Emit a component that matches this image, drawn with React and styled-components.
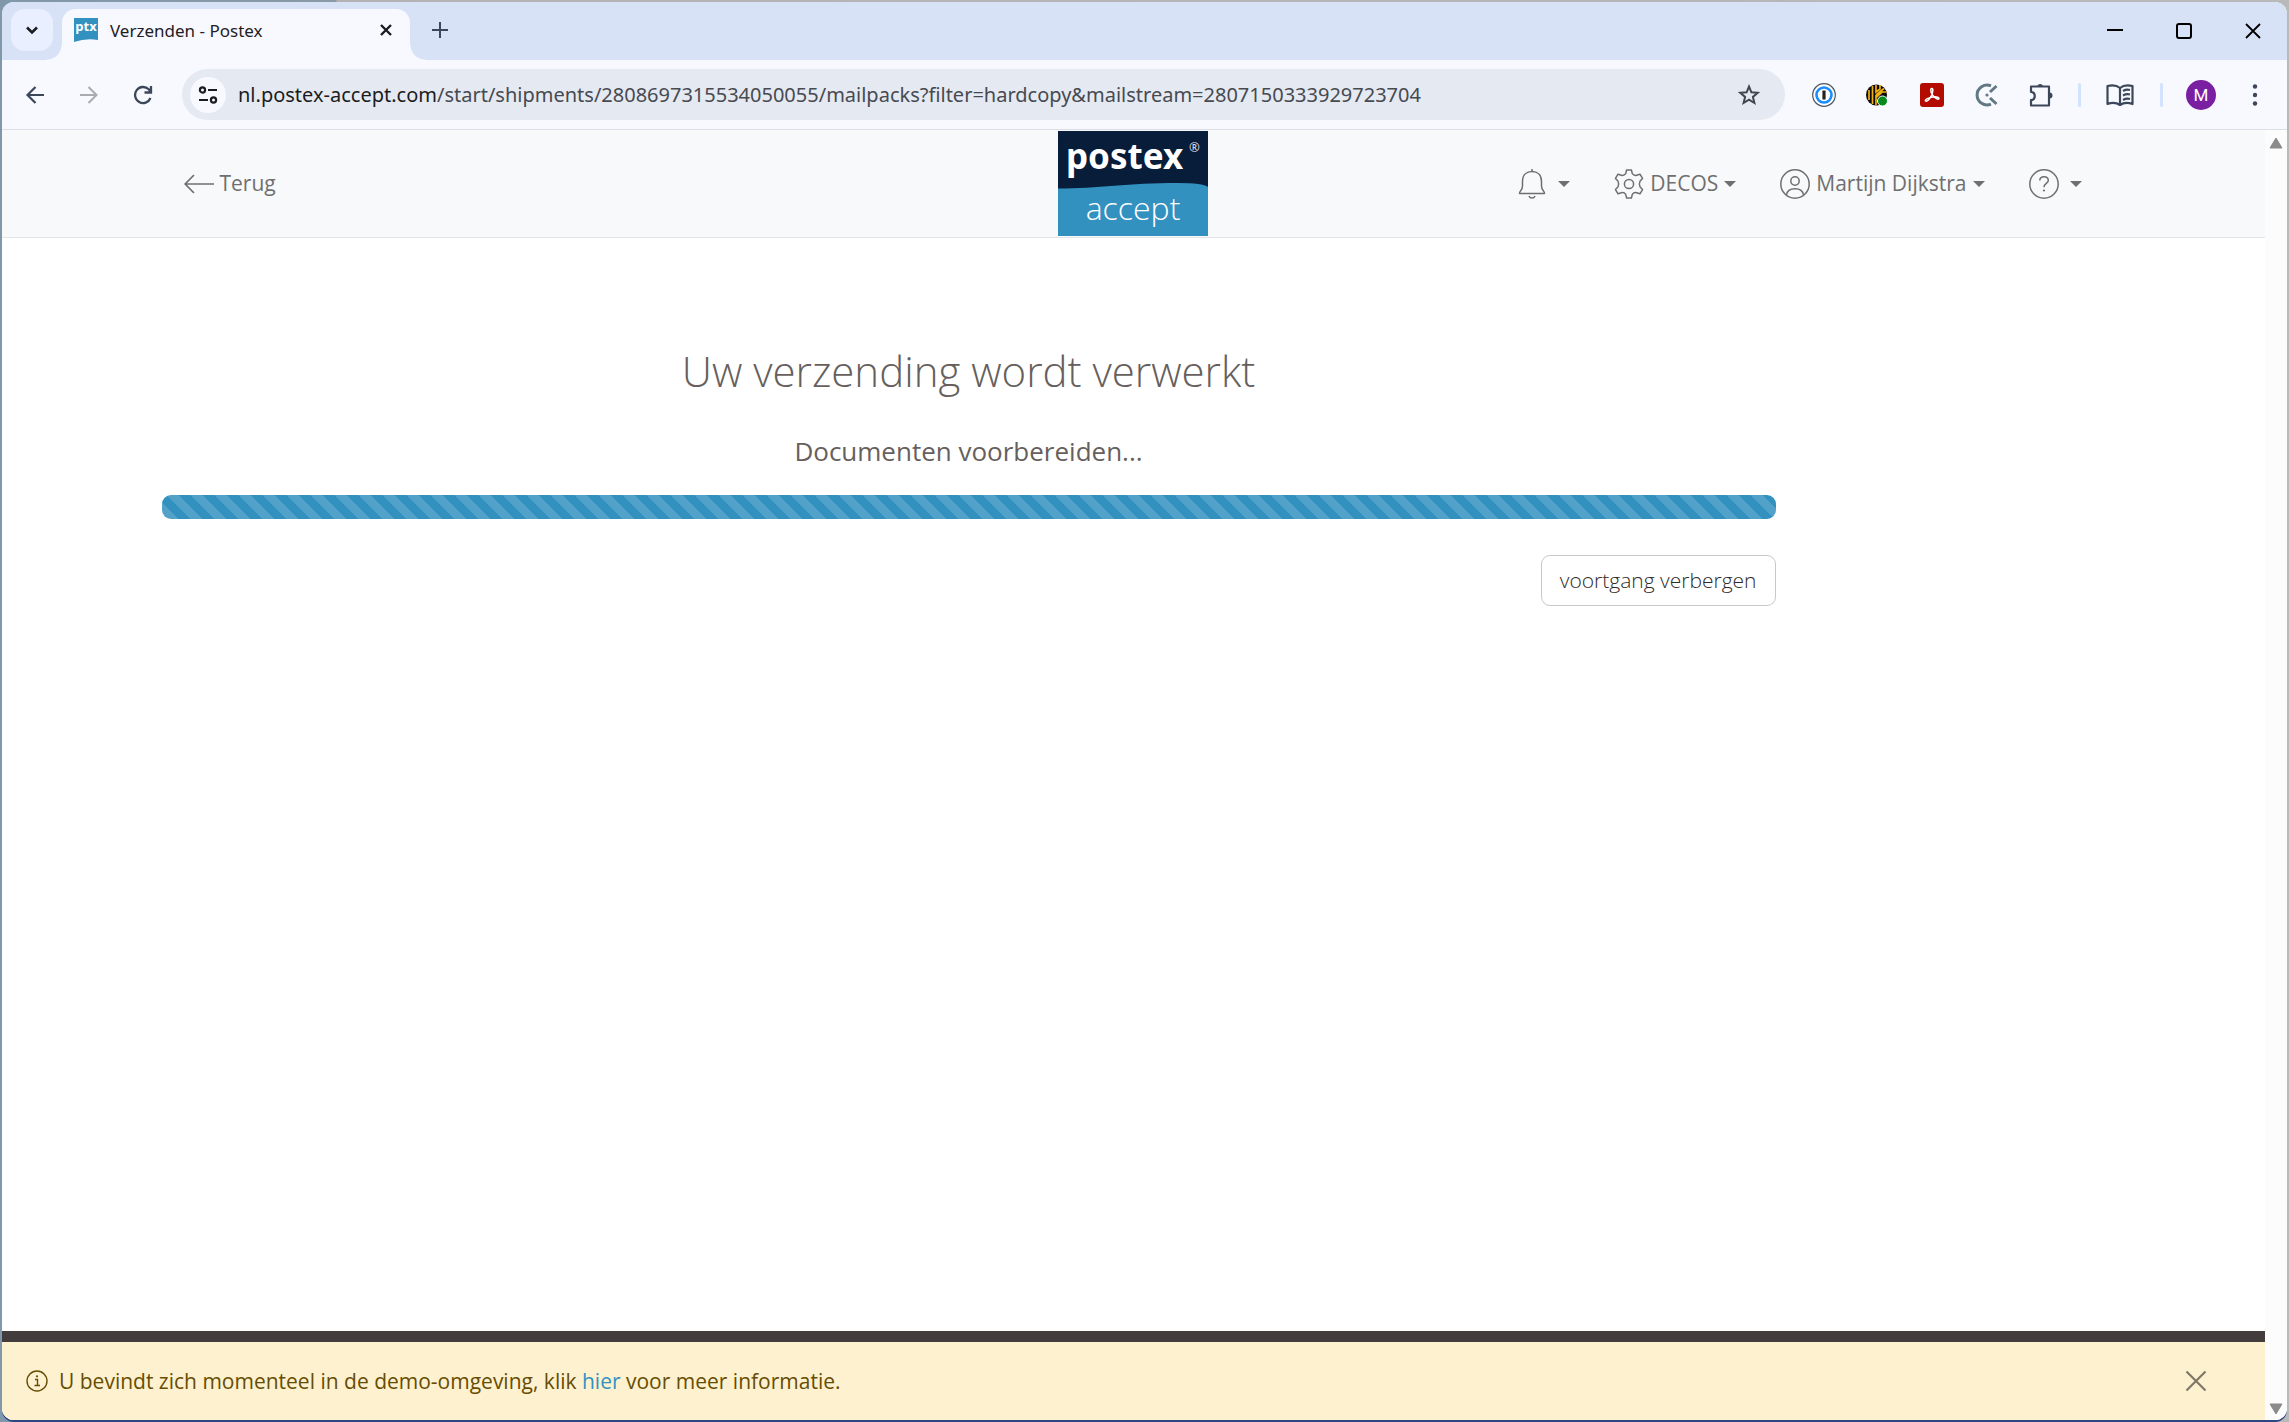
import React from "react";
import styled, { createGlobalStyle } from "styled-components";

const GlobalStyle = createGlobalStyle`
  * {
    box-sizing: border-box;
  }
  body {
    margin: 0;
    font-family: "Open Sans", "Noto Sans", sans-serif;
  }
  button {
    background: none;
    border: none;
    padding: 0;
    font: inherit;
    color: inherit;
    cursor: pointer;
  }
  svg {
    display: block;
    flex: none;
  }
`;

/* desktop + browser window */

const Desktop = styled.div`
  min-height: 100vh;
  padding: 2px;
  display: flex;
  background: linear-gradient(90deg, #8098aa 0, #8a9aa6 336px, #b4b2b3 337px, #b9b9b9 100%);
`;

const BrowserWindow = styled.div`
  flex: 1;
  min-width: 0;
  display: flex;
  flex-direction: column;
  border-radius: 12px;
  overflow: hidden;
  background: #f8f9ff;
  box-shadow: 0 2px 0 #2c4583;
`;

const TabStrip = styled.div`
  height: 58px;
  flex: none;
  display: flex;
  align-items: flex-start;
  padding: 7px 0 0 9px;
  background: #d8e2f7;
`;

const TabSearch = styled.button`
  width: 42px;
  height: 42px;
  border-radius: 14px;
  background: #e9effe;
  display: flex;
  align-items: center;
  justify-content: center;
`;

const Tab = styled.div`
  position: relative;
  width: 348px;
  height: 51px;
  margin-left: 9px;
  padding: 0 18px 9px 12px;
  display: flex;
  align-items: center;
  background: #f8f9ff;
  border-radius: 14px 14px 0 0;

  &::before,
  &::after {
    content: "";
    position: absolute;
    bottom: 0;
    width: 15px;
    height: 15px;
  }
  &::before {
    right: 100%;
    background: radial-gradient(circle at 0 0, transparent 14px, #f8f9ff 15px);
  }
  &::after {
    left: 100%;
    background: radial-gradient(circle at 100% 0, transparent 14px, #f8f9ff 15px);
  }
`;

const TabTitle = styled.span`
  flex: 1;
  margin-left: 12px;
  padding-top: 2px;
  font-family: "Noto Sans", "Open Sans", sans-serif;
  font-size: 17px;
  line-height: 24px;
  color: #1f2024;
`;

const NewTab = styled.button`
  width: 42px;
  height: 42px;
  margin-left: 9px;
  display: flex;
  align-items: center;
  justify-content: center;
`;

const WindowControls = styled.div`
  margin-left: auto;
  display: flex;
`;

const WindowButton = styled.button`
  width: 69px;
  height: 44px;
  display: flex;
  align-items: center;
  justify-content: center;
`;

const Toolbar = styled.div`
  height: 70px;
  flex: none;
  display: flex;
  align-items: center;
  padding: 0 8px 0 6px;
  border-bottom: 1px solid #dcdfe8;
  color: #3c475a;
`;

const ToolButton = styled.button`
  width: ${(props) => props.$width || 54}px;
  height: 44px;
  flex: none;
  display: flex;
  align-items: center;
  justify-content: center;
`;

const AddressBar = styled.div`
  flex: 1;
  min-width: 0;
  height: 51px;
  margin: 0 12px;
  padding: 0 14px 0 8px;
  display: flex;
  align-items: center;
  background: #e5e9f2;
  border-radius: 26px;
`;

const SiteInfo = styled.button`
  width: 36px;
  height: 36px;
  flex: none;
  border-radius: 50%;
  background: #f8f9ff;
  display: flex;
  align-items: center;
  justify-content: center;
`;

const Url = styled.div`
  flex: 1;
  min-width: 0;
  margin-left: 12px;
  overflow: hidden;
  white-space: nowrap;
  font-family: "Noto Sans", "Open Sans", sans-serif;
  font-size: 20px;
  line-height: 30px;
  color: #474a50;
  outline: none;
`;

const Domain = styled.span`
  color: #1b1c20;
`;

const Separator = styled.span`
  width: 3px;
  height: 24px;
  border-radius: 2px;
  background: #d3e2fd;
`;

const Avatar = styled.span`
  width: 30px;
  height: 30px;
  border-radius: 50%;
  background: #7b1fa2;
  color: #fff;
  font-family: Roboto, sans-serif;
  font-size: 17px;
  line-height: 30px;
  text-align: center;
`;

/* page */

const Viewport = styled.div`
  flex: 1;
  display: flex;
  background: #fff;
`;

const Page = styled.div`
  flex: 1;
  min-width: 0;
  display: flex;
  flex-direction: column;
`;

const ScrollBar = styled.div`
  width: 22px;
  flex: none;
  padding: 7px 4px 5px;
  display: flex;
  flex-direction: column;
  justify-content: space-between;
  background: #fcfcfc;
`;

const Header = styled.header`
  background: #f8f9fb;
  border-bottom: 1px solid #e3e5e8;
`;

const Container = styled.div`
  max-width: 1980px;
  margin: 0 auto;
  padding: 0 18px;
`;

const NavBar = styled(Container)`
  height: 107px;
  display: grid;
  grid-template-columns: 1fr auto 1fr;
  align-items: center;
  padding: 0 42px 0 40px;
  color: #6f6f6f;
  font-size: 21px;
  font-weight: 400;
  line-height: 33px;
`;

const BackLink = styled.a`
  justify-self: start;
  display: flex;
  align-items: center;
  gap: 6px;
  color: inherit;
  text-decoration: none;
`;

const NavMenu = styled.nav`
  justify-self: end;
  display: flex;
  gap: 44px;
`;

const NavItem = styled.button`
  display: flex;
  align-items: center;
  gap: 6px;
`;

const Caret = styled.span`
  margin-left: ${(props) => (props.$wide ? 5 : 0)}px;
  border: 6px solid transparent;
  border-top-color: currentColor;
  border-bottom: 0;
`;

const Main = styled.main`
  flex: 1;
`;

const Progress = styled.section`
  width: calc((100% + 36px) * 10 / 12 - 36px);
  padding-top: 106px;
  display: flex;
  flex-direction: column;
  align-items: center;
  color: #675f5d;
`;

const Title = styled.h1`
  margin: 0;
  font-size: 42px;
  font-weight: 300;
  line-height: 54px;
`;

const Step = styled.h2`
  margin: 33px 0 0;
  font-size: 26px;
  font-weight: 400;
  line-height: 40px;
`;

const ProgressBar = styled.div`
  width: 100%;
  height: 24px;
  margin-top: 24px;
  border-radius: 9px;
  background-color: #3391c0;
  background-image: linear-gradient(
    45deg,
    rgba(255, 255, 255, 0.15) 25%,
    transparent 25%,
    transparent 50%,
    rgba(255, 255, 255, 0.15) 50%,
    rgba(255, 255, 255, 0.15) 75%,
    transparent 75%,
    transparent
  );
  background-size: 24px 24px;
  background-position: 5px 0;
`;

const HideButton = styled.button`
  && {
    align-self: flex-end;
    height: 51px;
    margin-top: 36px;
    padding: 0 18px 2px;
    border: 1px solid #c9c9c9;
    border-radius: 9px;
    background: #fff;
    color: #2f2b2b;
    font-size: 21px;
    font-weight: 300;
  }
`;

const Footer = styled.footer`
  height: 11px;
  background: #423c3c;
`;

const Notice = styled.div`
  height: 78px;
  padding: 0 48px 0 24px;
  display: flex;
  align-items: center;
  background: #fef1cf;
  color: #664d03;
`;

const NoticeText = styled.p`
  flex: 1;
  margin: 0 0 0 11px;
  font-size: 21px;
  line-height: 33px;

  a {
    color: #3391c0;
    text-decoration: none;
  }
`;

const CloseButton = styled.button`
  width: 42px;
  height: 42px;
  display: flex;
  align-items: center;
  justify-content: center;
`;

/* icons */

function Icon({ size = 24, box = 24, stroke = 2, color = "currentColor", children }) {
  return (
    <svg width={size} height={size} viewBox={`0 0 ${box} ${box}`} fill="none" stroke={color} strokeWidth={stroke} aria-hidden="true">
      {children}
    </svg>
  );
}

function Favicon() {
  return (
    <svg width="24" height="24" viewBox="0 0 24 24" aria-hidden="true">
      <path d="M0 0H24V22Q12 20 0 24Z" fill="#3391c0" />
      <text x="12" y="13" textAnchor="middle" fontFamily="Open Sans, sans-serif" fontSize="13" fontWeight="700" fill="#fff">ptx</text>
    </svg>
  );
}

function Logo() {
  return (
    <svg width="150" height="105" viewBox="0 0 150 105" role="img" aria-label="postex accept">
      <path d="M0 0H150V105H0Z" fill="#081d3a" />
      <path d="M0 57.500C40 57.500 70 52 120 52Q145 52 150 56V105H0Z" fill="#3391c0" />
      <text x="8" y="38" fontFamily="Noto Sans, sans-serif" fontSize="35" fontWeight="700" fill="#fff">postex</text>
      <text x="131" y="21" fontFamily="Open Sans, sans-serif" fontSize="13" fontWeight="600" fill="#d5dae2">®</text>
      <text x="75" y="89" textAnchor="middle" fontFamily="Open Sans, sans-serif" fontSize="32" fontWeight="300" fill="#fff">accept</text>
    </svg>
  );
}

function Extensions() {
  return (
    <>
      <ToolButton aria-label="1Password">
        <Icon>
          <circle cx="12" cy="12" r="11.300" fill="#fff" stroke="#4d5560" strokeWidth="1.200" />
          <circle cx="12" cy="12" r="7.500" stroke="#1a8cff" strokeWidth="2.600" />
          <path d="M12 7.500V16.500" stroke="#222" strokeWidth="3.200" />
        </Icon>
      </ToolButton>
      <ToolButton aria-label="Wachtwoorden">
        <Icon>
          <circle cx="10.500" cy="12" r="10.500" fill="#0b0b0b" stroke="none" />
          <path d="M3 7V17M6.500 3V21M10 12V22M10 2V9L14 6V2M18 5.500L10 12M20.500 9H16L10 14.500" stroke="#f0b010" strokeWidth="1.700" />
          <circle cx="16.500" cy="18" r="5" fill="#068a1e" stroke="#fff" strokeWidth="1" />
        </Icon>
      </ToolButton>
      <ToolButton aria-label="Adobe Acrobat">
        <Icon>
          <rect width="24" height="24" rx="3" fill="#b30b00" stroke="none" />
          <path d="M11.500 5.500C13.500 5 13 9 11.500 12.500C10 16 7 19 5.500 18C4.500 16.500 9 14.500 13 14C17 13.500 19.500 14.500 18.800 16C17.500 17 12.500 13.500 11.200 9.500C10.700 7.500 10.500 5.800 11.500 5.500Z" stroke="#fff" strokeWidth="1.500" />
        </Icon>
      </ToolButton>
      <ToolButton aria-label="Clockify">
        <Icon color="#627984" stroke={3}>
          <path d="M17 2.800A10 10 0 1 0 17 21.200" />
          <path d="M16 9L22.500 3M16 15L22.500 21" />
          <circle cx="13" cy="12" r="1.600" fill="#627984" stroke="none" />
        </Icon>
      </ToolButton>
      <ToolButton $width={56} aria-label="Extensies">
        <Icon size={26} box={26} stroke={2.2}>
          <path d="M3 4.500H21V23.500H3V18.200C8 17.500 8 10.500 3 9.800Z" strokeLinejoin="round" />
          <path d="M9.300 4A3 3 0 0 1 15 4ZM21.500 10.500A3 3 0 0 1 21.500 16.500Z" fill="currentColor" stroke="none" />
        </Icon>
      </ToolButton>
    </>
  );
}

function NavDropdown({ icon, label, title }) {
  return (
    <NavItem aria-label={title} aria-haspopup="menu">
      {icon}
      {label}
      <Caret $wide={!label} />
    </NavItem>
  );
}

const bellIcon = (
  <Icon size={30} box={30} stroke={1.5}>
    <path d="M2.500 24.500C2.500 22 5.500 21 5.500 17V12.500C5.500 6 9.500 2.500 15 2.500S24.500 6 24.500 12.500V17C24.500 21 27.500 22 27.500 24.500Z" strokeLinejoin="round" />
    <path d="M15 0V2.500M12 27A3.200 3.200 0 0 0 18 27" />
  </Icon>
);

const gearIcon = (
  <Icon size={30} box={30} stroke={1.5}>
    <circle cx="15" cy="15" r="4.600" />
    <path
      d="M12.600 1H17.400L18.300 4.600Q20 7 22.600 6.200L26 5.200L28.500 9.400L26.100 12Q24.600 15 26.100 18L28.500 20.600L26 24.800L22.600 23.800Q20 23 18.300 25.400L17.400 29H12.600L11.700 25.400Q10 23 7.400 23.800L4 24.800L1.500 20.600L3.900 18Q5.400 15 3.900 12L1.500 9.400L4 5.200L7.400 6.200Q10 7 11.700 4.600Z"
      strokeLinejoin="round"
    />
  </Icon>
);

const personIcon = (
  <Icon size={30} box={30} stroke={1.5}>
    <circle cx="15" cy="15" r="14.200" />
    <circle cx="15" cy="12" r="4.200" />
    <path d="M6.500 26C7 21.500 10 19.700 15 19.700S23 21.500 23.500 26" />
  </Icon>
);

const helpIcon = (
  <Icon size={30} box={30} stroke={1.5}>
    <circle cx="15" cy="15" r="14.200" />
    <path d="M10.800 11.500C10.800 6.500 19.300 6.500 19.300 11.500C19.300 14.500 15 14.500 15 18.200" />
    <circle cx="15" cy="21.500" r="1.100" fill="currentColor" stroke="none" />
  </Icon>
);

function BrowserChrome() {
  return (
    <>
      <TabStrip>
        <TabSearch aria-label="Tabbladen zoeken">
          <Icon size={18} box={18} stroke={2.6} color="#1b1c20"><path d="M4 6.500L9 11.500L14 6.500" /></Icon>
        </TabSearch>
        <Tab>
          <Favicon />
          <TabTitle>Verzenden - Postex</TabTitle>
          <button aria-label="Tabblad sluiten">
            <Icon size={12} box={12} stroke={2.4} color="#1b1c20"><path d="M1 1L11 11M11 1L1 11" /></Icon>
          </button>
        </Tab>
        <NewTab aria-label="Nieuw tabblad">
          <Icon size={16} box={16} color="#3c475a"><path d="M8 0V16M0 8H16" /></Icon>
        </NewTab>
        <WindowControls>
          <WindowButton aria-label="Minimaliseren">
            <Icon size={16} box={16} color="#000"><path d="M0 7H16" /></Icon>
          </WindowButton>
          <WindowButton aria-label="Maximaliseren">
            <Icon size={16} box={16} color="#000"><rect x="1" y="1" width="14" height="14" rx="2" /></Icon>
          </WindowButton>
          <WindowButton aria-label="Sluiten">
            <Icon size={16} box={16} stroke={1.8} color="#000"><path d="M1 1L15 15M15 1L1 15" /></Icon>
          </WindowButton>
        </WindowControls>
      </TabStrip>
      <Toolbar>
        <ToolButton aria-label="Terug">
          <Icon size={20} box={20} stroke={2.2}><path d="M19 10H3M10.500 2L2.500 10L10.500 18" /></Icon>
        </ToolButton>
        <ToolButton aria-label="Vooruit" disabled>
          <Icon size={20} box={20} color="#a9abb1"><path d="M1 10H17M9.500 2L17.500 10L9.500 18" /></Icon>
        </ToolButton>
        <ToolButton aria-label="Opnieuw laden">
          <Icon size={20} box={20} stroke={2.3}><path d="M17.500 13A8 8 0 1 1 15.700 4.300L17.500 6.500M18 1V7.500H11.500" /></Icon>
        </ToolButton>
        <AddressBar>
          <SiteInfo aria-label="Sitegegevens">
            <Icon size={20} box={20} stroke={2.2} color="#1b1c20">
              <circle cx="4.500" cy="5" r="2.600" />
              <path d="M10 5H19M1 15H10" />
              <circle cx="15.500" cy="15" r="2.600" />
            </Icon>
          </SiteInfo>
          <Url role="textbox" aria-label="Adresbalk" contentEditable suppressContentEditableWarning spellCheck={false}>
            <Domain>nl.postex-accept.com</Domain>
            /start/shipments/2808697315534050055/mailpacks?filter=hardcopy&amp;mailstream=2807150333929723704
          </Url>
          <ToolButton $width={44} aria-label="Bladwijzer toevoegen">
            <Icon size={24} box={24} stroke={2} color="#42464d">
              <path d="M12 3.500L14.400 9.300L20.700 9.800L15.900 13.900L17.400 20L12 16.700L6.600 20L8.100 13.900L3.300 9.800L9.600 9.300Z" />
            </Icon>
          </ToolButton>
        </AddressBar>
        <Extensions />
        <ToolButton as="span" $width={20}><Separator /></ToolButton>
        <ToolButton $width={62} aria-label="Leesmodus">
          <Icon size={28} box={28} stroke={2.2}>
            <path d="M14 7C10.500 4 5.500 4 1.500 5V23C5.500 21.500 10.500 21.500 14 24C17.500 21.500 22.500 21.500 26.500 23V5C22.500 4 17.500 4 14 7V24" strokeLinejoin="round" />
            <path d="M17 10Q20.500 8 24 9M17 14.500Q20.500 12.500 24 13.500M17 19Q20.500 17 24 18" />
          </Icon>
        </ToolButton>
        <ToolButton as="span" $width={20}><Separator /></ToolButton>
        <ToolButton $width={60} aria-label="Profiel"><Avatar>M</Avatar></ToolButton>
        <ToolButton $width={48} aria-label="Menu">
          <Icon size={22} box={22}>
            <g fill="currentColor" stroke="none">
              <circle cx="11" cy="2.500" r="2.200" />
              <circle cx="11" cy="11" r="2.200" />
              <circle cx="11" cy="19.500" r="2.200" />
            </g>
          </Icon>
        </ToolButton>
      </Toolbar>
    </>
  );
}

function App() {
  return (
    <Desktop>
      <GlobalStyle />
      <BrowserWindow>
        <BrowserChrome />
        <Viewport>
          <Page>
            <Header>
              <NavBar>
                <BackLink href="#terug">
                  <Icon size={30} box={30} stroke={1.7}><path d="M30 15H1.500M10 6L1.200 15L10 24" /></Icon>
                  Terug
                </BackLink>
                <Logo />
                <NavMenu>
                  <NavDropdown icon={bellIcon} title="Meldingen" />
                  <NavDropdown icon={gearIcon} label="DECOS" />
                  <NavDropdown icon={personIcon} label="Martijn Dijkstra" />
                  <NavDropdown icon={helpIcon} title="Help" />
                </NavMenu>
              </NavBar>
            </Header>
            <Main>
              <Container>
                <Progress>
                  <Title>Uw verzending wordt verwerkt</Title>
                  <Step>Documenten voorbereiden...</Step>
                  <ProgressBar role="progressbar" aria-label="Voortgang" />
                  <HideButton>voortgang verbergen</HideButton>
                </Progress>
              </Container>
            </Main>
            <Footer />
            <Notice role="alert">
              <Icon size={22} box={22} stroke={1.4}>
                <circle cx="11" cy="11" r="10" />
                <path d="M9 9.500H11.500V15.500M8.500 15.500H14" />
                <circle cx="11" cy="6.300" r="1.100" fill="currentColor" stroke="none" />
              </Icon>
              <NoticeText>
                U bevindt zich momenteel in de demo-omgeving, klik <a href="#info">hier</a> voor meer informatie.
              </NoticeText>
              <CloseButton aria-label="Melding sluiten">
                <Icon size={22} box={22} stroke={2.2} color="#7f7868"><path d="M1.500 1.500L20.500 20.500M20.500 1.500L1.500 20.500" /></Icon>
              </CloseButton>
            </Notice>
          </Page>
          <ScrollBar aria-hidden="true">
            <svg width="14" height="12" viewBox="0 0 14 12"><path d="M7 1L13 11H1Z" fill="#8b8b8b" stroke="#8b8b8b" strokeLinejoin="round" /></svg>
            <svg width="14" height="12" viewBox="0 0 14 12"><path d="M7 11L13 1H1Z" fill="#8b8b8b" stroke="#8b8b8b" strokeLinejoin="round" /></svg>
          </ScrollBar>
        </Viewport>
      </BrowserWindow>
    </Desktop>
  );
}

export default App;
